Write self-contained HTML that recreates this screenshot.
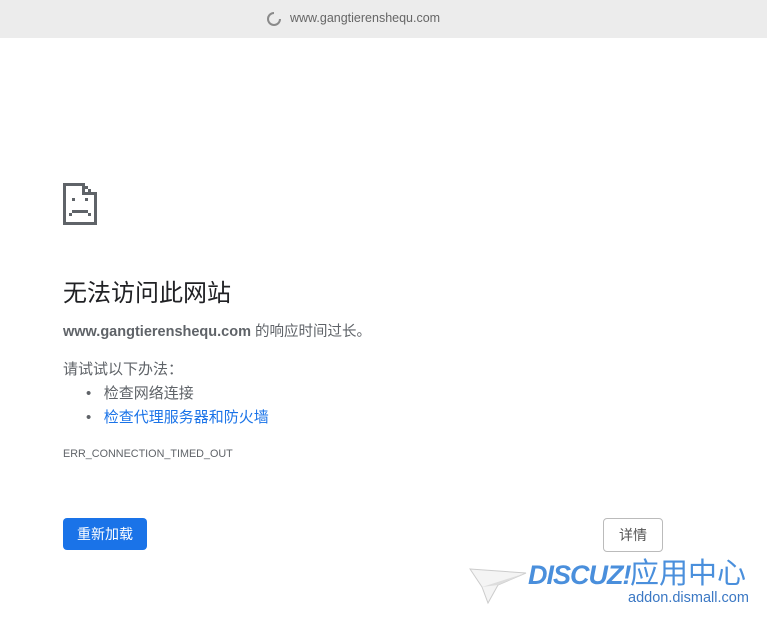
<!DOCTYPE html>
<html><head><meta charset="utf-8"><style>
*{margin:0;padding:0;box-sizing:border-box}
body{width:767px;height:625px;background:#fff;position:relative;overflow:hidden;font-family:"Liberation Sans","Noto Sans CJK SC",sans-serif;color:#5f6368}
.bar{position:absolute;left:0;top:0;width:767px;height:38px;background:#ececec}
.url{position:absolute;left:290px;top:11px;font-size:12.5px;color:#666}
.a{position:absolute;white-space:nowrap}
</style></head><body>
<div class="bar">
<svg style="position:absolute;left:266px;top:11px" width="16" height="16" viewBox="0 0 16 16"><path d="M8 2 A6 6 0 1 0 14 8" fill="none" stroke="#8a8a8a" stroke-width="2"/></svg>
<div class="url">www.gangtierenshequ.com</div>
</div>
<svg style="position:absolute;left:63px;top:183px" width="34" height="42" viewBox="0 0 34 42" shape-rendering="crispEdges" fill="#5f6368">
<rect x="0" y="0" width="3" height="42"/><rect x="0" y="0" width="22" height="3"/><rect x="0" y="39" width="34" height="3"/><rect x="31" y="12" width="3" height="30"/>
<rect x="19" y="0" width="3" height="12"/><rect x="19" y="9" width="15" height="3"/><rect x="22" y="3" width="3" height="3"/><rect x="25" y="6" width="3" height="3"/><rect x="28" y="9" width="3" height="3"/>
<rect x="9" y="15" width="3" height="3"/><rect x="22" y="15" width="3" height="3"/>
<rect x="9" y="27" width="16" height="3"/><rect x="6" y="30" width="3" height="3"/><rect x="25" y="30" width="3" height="3"/>
</svg>
<div class="a" style="left:63px;top:273px;font-size:24px;color:#202124">无法访问此网站</div>
<div class="a" style="left:63px;top:320px;font-size:14.5px;color:#5f6368"><b style="color:#5f6368">www.gangtierenshequ.com</b> 的响应时间过长。</div>
<div class="a" style="left:63px;top:358px;font-size:15px">请试试以下办法：</div>
<div class="a" style="left:86px;top:382px;font-size:15px">•&nbsp;&nbsp;&nbsp;检查网络连接</div>
<div class="a" style="left:86px;top:406px;font-size:15px">•&nbsp;&nbsp;&nbsp;<span style="color:#1a73e8">检查代理服务器和防火墙</span></div>
<div class="a" style="left:63px;top:448px;font-size:10.8px">ERR_CONNECTION_TIMED_OUT</div>
<div class="a" style="left:63px;top:518px;width:84px;height:32px;background:#1a73e8;border-radius:4px;color:#fff;font-size:14px;line-height:32px;text-align:center">重新加载</div>
<div class="a" style="left:603px;top:518px;width:60px;height:34px;border:1px solid #bbb;border-radius:4px;color:#555;font-size:14px;line-height:32px;text-align:center">详情</div>
<svg style="position:absolute;left:468px;top:563px" width="60" height="45" viewBox="0 0 60 45"><path d="M2 6 L58 10 L30 22 L20 40 L14 24 Z" fill="#f4f4f4" stroke="#ccc"/><path d="M14 24 L58 10 L30 22Z" fill="#ddd"/></svg>
<div class="a" style="left:528px;top:560px;font-size:27px;font-weight:bold;font-style:italic;color:#4a8fdc;letter-spacing:-1px">DISCUZ!</div>
<div class="a" style="left:630px;top:557px;font-size:29px;line-height:34px;color:#4a8fdc">应用中心</div>
<div class="a" style="left:628px;top:590px;font-size:14.5px;color:#3b78c4">addon.dismall.com</div>
</body></html>
